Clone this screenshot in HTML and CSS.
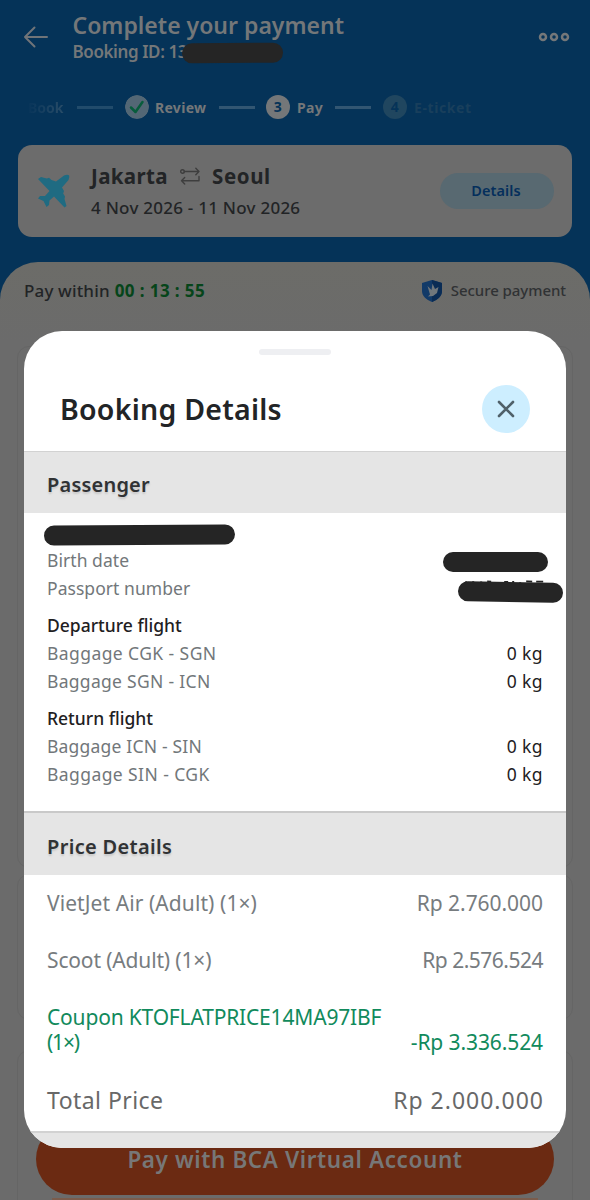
FILE: index.html
```html
<!DOCTYPE html>
<html lang="en">
<head>
<meta charset="utf-8">
<title>Complete your payment</title>
<link rel="stylesheet" href="styles.css">
</head>
<body>
<main class="screen">
  <header class="topbar">
    <svg class="back" viewBox="0 0 26 24" width="26" height="24"><path d="M24 12H2M11.500 2.500 2 12l9.500 9.500"/></svg>
    <div class="heading">
      <h1>Complete your payment</h1>
      <p><span class="t-id">Booking ID: 13</span><i class="redact redact-id"></i></p>
    </div>
    <svg class="more" viewBox="0 0 32 10" width="32" height="10"><circle cx="5" cy="5" r="3"/><circle cx="16" cy="5" r="3"/><circle cx="27" cy="5" r="3"/></svg>
  </header>
  <nav class="steps">
    <span class="step step-book"><b>Book</b></span>
    <i class="rule rule-a"></i>
    <span class="step step-review"><svg class="dot" viewBox="0 0 24 24" width="24" height="24"><circle cx="12" cy="12" r="12"/><path d="m6 12.500 4.500 4.500L17.500 7"/></svg><b>Review</b></span>
    <i class="rule rule-b"></i>
    <span class="step step-pay"><em class="dot">3</em><b>Pay</b></span>
    <i class="rule rule-c"></i>
    <span class="step step-ticket"><em class="dot">4</em><b>E-ticket</b></span>
  </nav>
  <section class="trip">
    <svg class="plane" viewBox="0 0 34 34" width="34" height="34"><path d="M1 5 4 3 10 4.500 12 3.800 14.500 6 19 7.500 27 1.500Q30 0 32 1.200 33 3 31.500 6L25 13.500 27 17 26.200 19.500 28 22.500 27.500 25 29.500 32 27.500 33.500 17 22.500 12.500 26.500 12 31 9.500 33 6.500 27 1 24.500 3 22 8 22 12.500 17Z"/></svg>
    <div class="trip-text">
      <div class="route"><span class="t-from">Jakarta</span><svg class="swap" viewBox="0 0 20 18" width="20" height="18"><circle cx="2.500" cy="4.500" r="1.800"/><path d="M4.300 4.500H19M15.800 1.300 19 4.500l-3.200 3.200M19 9.500v4.200H1.500M4.700 10.500l-3.200 3.200 3.200 3.200"/></svg><span class="t-to">Seoul</span></div>
      <div class="dates">4 Nov 2026 - 11 Nov 2026</div>
    </div>
    <div class="details">Details</div>
  </section>
  <section class="sheet">
    <div class="sheet-top">
      <div class="timer"><span class="t-within">Pay within</span><b class="t-clock">00 : 13 : 55</b></div>
      <div class="secure"><svg viewBox="0 0 22 24" width="22" height="24"><path class="shield" d="M11 1 21 4v8c0 5-4 8.500-10 11C5 20.500 1 17 1 12V4Z"/><path class="shade" d="M11 1 21 4v8c0 5-4 8.500-10 11Z"/><path class="bird" d="M6.500 7 10.500 11l1-6.500 2.500 5.500 3.500-2-1.500 6-4 3-5 .5 2-2Z"/></svg><span>Secure payment</span></div>
    </div>
    <div class="card card-a"></div>
    <div class="card card-b"></div>
    <div class="card card-c"></div>
  </section>
  <div class="paybar">Pay with BCA Virtual Account</div>
  <div class="under"></div>

  <section class="modal">
    <div class="modal-head">
      <i class="grip"></i>
      <div class="modal-title"><h2>Booking Details</h2>
      <span class="close"><svg viewBox="0 0 18 18" width="18" height="18"><path d="m2 2 14 14M16 2 2 16"/></svg></span></div>
    </div>
    <h3 class="band band-pass">Passenger</h3>
    <div class="info">
      <div class="name"><i class="redact redact-name"></i></div>
      <div class="row"><span class="t-birth">Birth date</span><i class="redact redact-birth"></i></div>
      <div class="row"><span class="t-birth">Passport number</span><i class="redact redact-passport"><svg viewBox="0 0 80 4" width="80" height="4"><path d="M2 2v2M9 2v2M17 2v2M23 2h4M40 2h4M49 1v3M56 2v2M62 1h6M72 1h7"/></svg></i></div>
      <div class="row flight"><span>Departure flight</span></div>
      <div class="row"><span class="t-b1">Baggage CGK - SGN</span><span class="kg">0 kg</span></div>
      <div class="row"><span class="t-b2">Baggage SGN - ICN</span><span class="kg">0 kg</span></div>
      <div class="row flight"><span>Return flight</span></div>
      <div class="row"><span class="t-b3">Baggage ICN - SIN</span><span class="kg">0 kg</span></div>
      <div class="row"><span class="t-b1">Baggage SIN - CGK</span><span class="kg">0 kg</span></div>
    </div>
    <h3 class="band band-price">Price Details</h3>
    <div class="prices">
      <div class="price"><span class="t-viet">VietJet Air (Adult) (1×)</span><span class="t-p1">Rp 2.760.000</span></div>
      <div class="price"><span class="t-scoot">Scoot (Adult) (1×)</span><span class="t-p2">Rp 2.576.524</span></div>
      <div class="price coupon"><p class="t-coupon">Coupon KTOFLATPRICE14MA97IBF <span class="t-x">(1×)</span></p><span class="t-p3">-Rp 3.336.524</span></div>
      <div class="price total"><span class="t-total">Total Price</span><span class="t-p4">Rp 2.000.000</span></div>
    </div>
    <div class="band-end"></div>
  </section>
</main>
</body>
</html>
```
FILE: styles.css
```css
* { box-sizing: border-box; margin: 0; padding: 0; }
body { width: 590px; height: 1200px; overflow: hidden; background: #053358; font-family: "Noto Sans", sans-serif; color: #222426; }
span, b, em { white-space: nowrap; }
i, em { font-style: normal; display: block; }
.screen { position: relative; width: 590px; height: 1200px; overflow: hidden; display: flex; flex-direction: column; }
svg { display: block; flex: none; fill: none; stroke-linecap: round; stroke-linejoin: round; }

.topbar { display: flex; height: 86px; padding: 10px 20px 0 23px; flex: none; }
.back { margin-top: 15px; stroke: #707478; stroke-width: 2; }
.heading { margin-left: 23.500px; flex: 1; color: #747779; }
.heading h1 { font-size: 23px; line-height: 30px; font-weight: 600; }
.heading p { display: flex; font-size: 17px; line-height: 24px; font-weight: 600; }
.t-id { letter-spacing: -.4px; }
.more { margin-top: 22px; stroke: #747779; stroke-width: 2.500; }
.redact { background: #252525; border-radius: 10px; flex: none; }
.redact-id { width: 101px; height: 20px; margin: 3px 0 0 -5px; transform: rotate(-.5deg); }

.steps { display: flex; align-items: center; height: 42px; padding-left: 28px; flex: none; font-size: 14px; color: #747779; }
.step { display: flex; align-items: center; gap: 6px; flex: none; }
.step-book { color: #173e5c; width: 36px; }
.step-book b { background: linear-gradient(90deg, #08355a, #2a4d68); -webkit-background-clip: text; background-clip: text; color: transparent; }
.rule { width: 36px; height: 3px; background: #325672; flex: none; }
.rule-a { margin: 0 12px 0 13px; background: #214b6b; }
.rule-b { margin: 0 11px 0 13px; }
.rule-c { margin: 0 12px 0 13px; }
.dot { width: 24px; height: 24px; border-radius: 50%; flex: none; }
svg.dot circle { fill: #536775; }
svg.dot path { stroke: #075c3c; stroke-width: 2.500; }
.step-review { width: 81px; gap: 6px; letter-spacing: .3px; }
.step-pay { width: 56px; gap: 7px; letter-spacing: .3px; }
em.dot { background: #747779; color: #053358; font-weight: 700; line-height: 24px; text-align: center; }
.step-ticket { gap: 7px; color: #193f5c; letter-spacing: .6px; }
.step-ticket .dot { background: #20465f; color: #053358; }

.trip { height: 92px; margin: 17px 18px 25px; border-radius: 14px; background: #6c6c6c; display: flex; flex: none; padding-left: 19px; }
.plane { margin-top: 29px; fill: #1f6b82; }
.trip-text { margin-left: 20px; flex: 1; padding-top: 16px; }
.route { display: flex; height: 30px; font-size: 20.500px; line-height: 30px; font-weight: 700; }
.t-from { width: 77px; letter-spacing: .35px; }
.t-to { letter-spacing: .6px; }
.swap { margin: 6px 12px 0 12px; stroke: #3e3e3e; stroke-width: 1.400; }
.dates { font-size: 17px; line-height: 34px; font-weight: 500; letter-spacing: .25px; }
.details { width: 114px; height: 36px; border-radius: 18px; background: #586971; color: #052f5c; font-size: 14.500px; line-height: 35px; font-weight: 600; letter-spacing: .1px; text-align: center; margin: 28px 18px 0 0; padding-right: 2px; }

.sheet { flex: 1; border-radius: 38px 38px 0 0; background: linear-gradient(#6c6c68, #6b6b6b 80px); }
.sheet-top { height: 84px; display: flex; justify-content: space-between; padding: 14px 24px; font-size: 17px; line-height: 30px; font-weight: 500; }
.timer { display: flex; gap: 5px; }
.t-within { letter-spacing: .15px; }
.t-clock { color: #06451a; letter-spacing: .4px; }
.secure { display: flex; gap: 8px; font-size: 15px; line-height: 29px; letter-spacing: -.05px; color: #303234; }
.secure svg { margin-top: 3px; }
.shield { fill: #123a68; }
.shade { fill: #0a2c55; }
.bird { fill: #70777c; }
.card { margin: 0 17px; border: 1px solid #656565; border-radius: 12px; }
.card-a { height: 522px; }
.card-b { height: 146px; margin-top: 6px; }
.card-c { height: 170px; margin-top: 30px; }

.paybar { position: absolute; left: 36px; top: 1123px; width: 518px; height: 72px; border-radius: 36px; background: #6b2a12; color: #777; text-align: center; font-size: 22.500px; line-height: 73px; font-weight: 600; letter-spacing: .6px; }
.under { position: absolute; left: 52px; top: 1198px; width: 486px; height: 2px; background: #7b5c4c; }

.modal { position: absolute; left: 24px; top: 331px; width: 542px; height: 817px; border-radius: 38px; overflow: hidden; background: #fff; display: flex; flex-direction: column; }
.modal-head { height: 120px; padding: 18px 36px 0 36px; flex: none; }
.grip { width: 72px; height: 6px; border-radius: 3px; background: #eeeff2; margin: 0 auto 30px 199px; }
.modal-title { display: flex; justify-content: space-between; }
h2 { font-size: 28.500px; line-height: 49px; height: 48px; font-weight: 600; letter-spacing: .25px; }
.close { width: 48px; height: 48px; border-radius: 50%; background: #cdeeff; display: grid; place-items: center; }
.close svg { stroke: #50616a; stroke-width: 2.600; }
.band { background: #e5e5e5; border-top: 1px solid #d2d2d2; padding-left: 23px; flex: none; font-size: 20px; font-weight: 600; color: #303234; text-shadow: 0 2px 2px #c8c8c8; letter-spacing: .2px; }
.band-pass { height: 62px; line-height: 65px; }
.band-price { height: 64px; line-height: 67px; border-top: 2px solid #c9c9c9; letter-spacing: .33px; }
.info { height: 298px; padding: 12px 23px 0; flex: none; font-size: 17.500px; line-height: 28px; color: #72777a; }
.name { height: 21px; }
.redact-name { width: 191px; height: 20px; margin-left: -3px; transform: rotate(-.4deg); }
.row { display: flex; justify-content: space-between; height: 28px; }
.flight { height: 37px; padding-top: 9px; color: #1e2022; font-weight: 500; }
.t-birth { letter-spacing: .05px; }
.t-b1 { letter-spacing: .42px; }
.t-b2 { letter-spacing: .3px; }
.t-b3 { letter-spacing: .2px; }
.kg { color: #1e2022; letter-spacing: .4px; }
.redact-birth { width: 105px; height: 20px; margin: 6px -5px 0 0; }
.redact-passport { width: 105px; height: 20px; margin: 8px -20px 0 0; transform: rotate(1deg); }
.redact-passport svg { margin: -2px 0 0 6px; stroke: #252525; stroke-width: 2; stroke-linecap: butt; }
.prices { height: 256px; padding: 0 23px; flex: none; font-size: 21px; line-height: 25px; font-weight: 400; color: #777c7f; }
.price { display: flex; justify-content: space-between; align-items: flex-end; height: 57px; padding-bottom: 16px; }
.price.coupon { height: 82px; color: #118a5c; }
.price.total { height: 59px; padding-bottom: 17px; font-size: 23px; color: #686868; }
.t-viet { letter-spacing: .08px; }
.t-scoot { letter-spacing: -.15px; }
.t-p1 { letter-spacing: -.05px; }
.t-p2 { letter-spacing: -.5px; }
.t-coupon { width: 350px; letter-spacing: -.18px; }
.t-x { letter-spacing: -1.200px; }
.t-p3 { letter-spacing: -.1px; }
.t-total { letter-spacing: .45px; }
.t-p4 { letter-spacing: 1px; margin-right: -1px; }
.band-end { flex: 1; background: #e5e5e5; border-top: 2px solid #d2d2d2; }
```
